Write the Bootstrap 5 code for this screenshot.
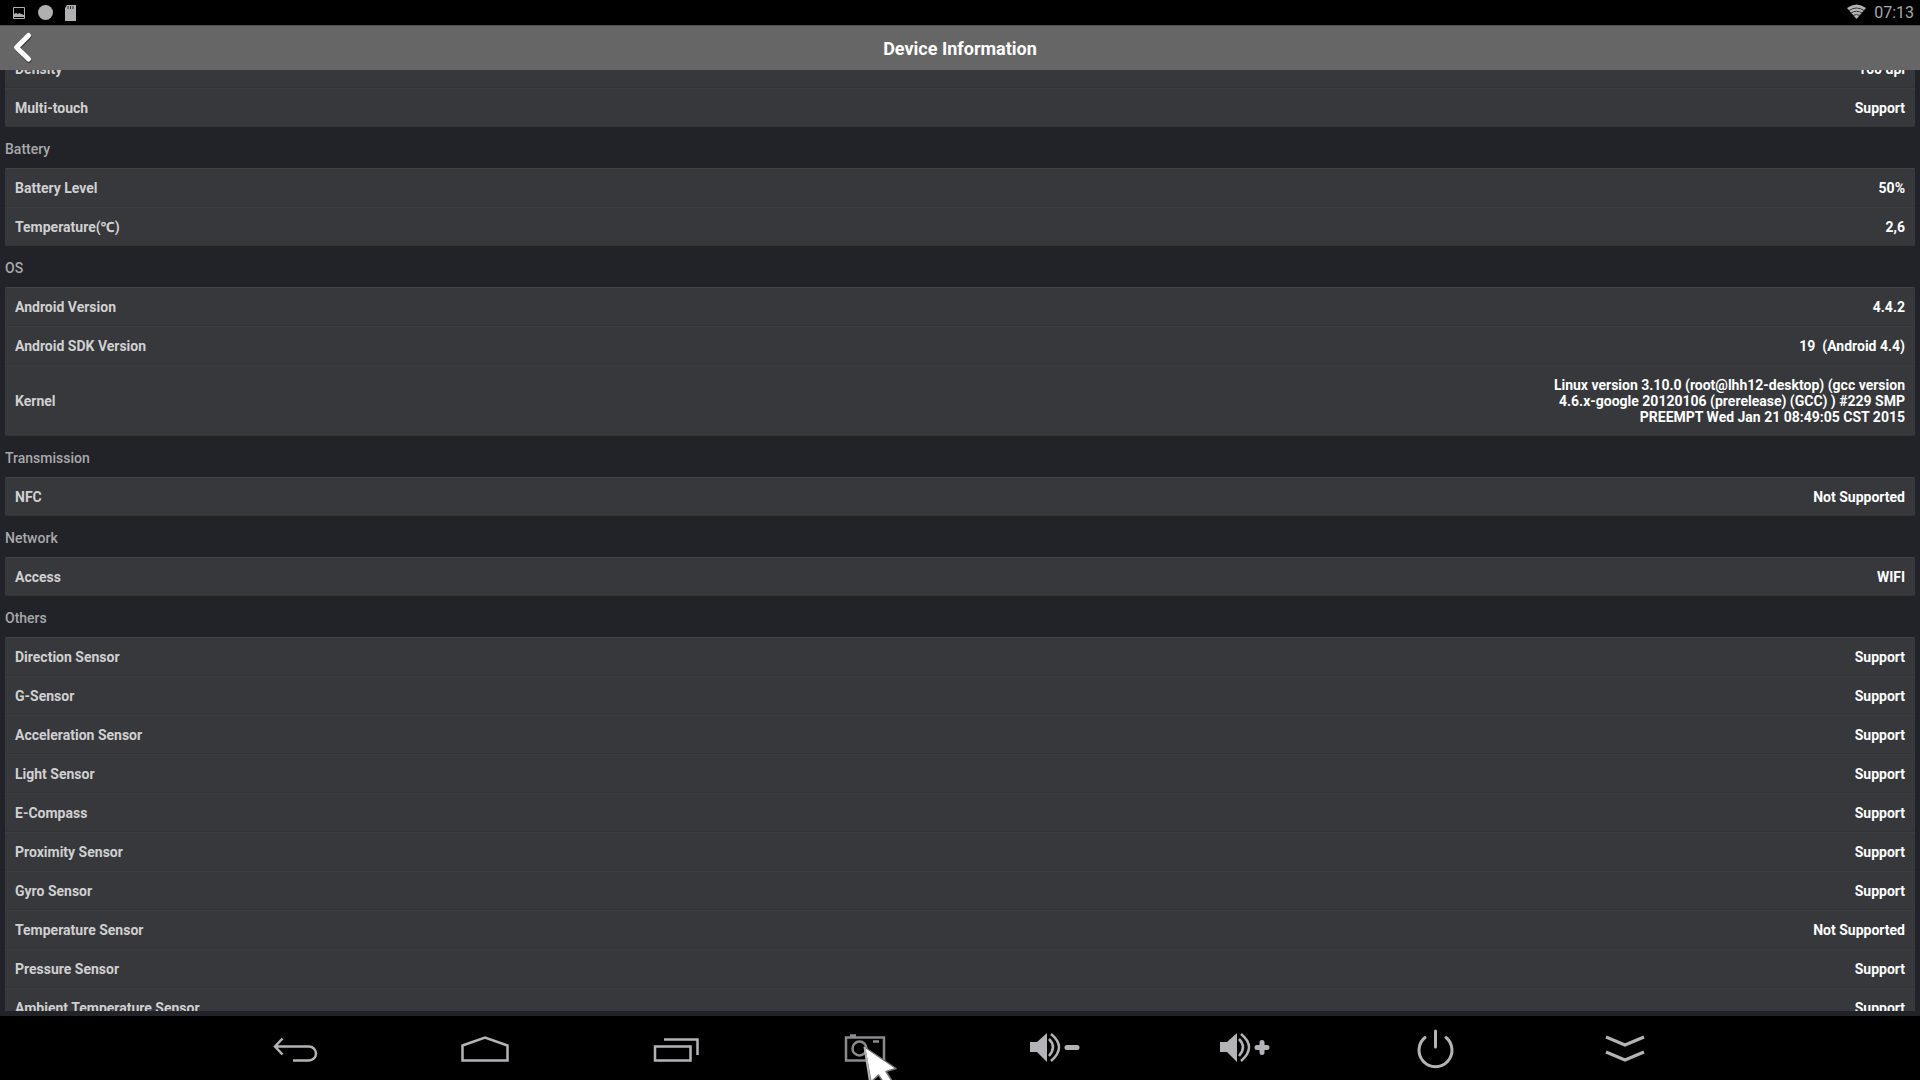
<!DOCTYPE html>
<html lang="en">
<head>
<meta charset="utf-8">
<meta name="viewport" content="width=device-width, initial-scale=1">
<title>Device Information</title>
<link href="https://cdn.jsdelivr.net/npm/bootstrap@5.3.0/dist/css/bootstrap.min.css" rel="stylesheet">
<style>
  body { background: #222328; color: #fff; font-family: Roboto, "Noto Sans", sans-serif; font-size: 14px; line-height: 16px; }
  .status-bar { background: #000; height: 25px; padding: 0 6px 0 12px; color: #a9a9ab; font-size: 16px; }
  .title-bar { background: #666; height: 45px; border-top: 1px solid #505050; padding-top: 2px; }
  .title-bar h1 { font-size: 18px; line-height: 22px; font-weight: 700; }
  .back-btn { width: 45px; height: 44px; }
  .info-scroll { min-height: 0; padding: 0 5px; margin-bottom: 5px; }
  .info-list { margin-top: -21px; }
  .section-title { font-size: 14px; line-height: 16px; font-weight: 500; color: #a8a9ab; margin: 0; padding: 14px 0 11px; }
  .info-card { background: #37383b; border-radius: 2px; overflow: hidden; }
  .info-row { padding: 12px 10px 11px; background: linear-gradient(#3c3d40, #3c3d40) top / 100% 1px no-repeat, linear-gradient(#333437, #333437) bottom / 100% 1px no-repeat; }
  .info-row:first-child { background: linear-gradient(#434447, #434447) top / 100% 1px no-repeat, linear-gradient(#333437, #333437) bottom / 100% 1px no-repeat; }
  .info-row dt { font-weight: 700; color: #d0d0d1; }
  .info-row dd { max-width: 360px; margin: 0; text-align: right; font-weight: 700; white-space: pre-wrap; }
  .nav-keys { background: #000; height: 64px; padding: 0 10.4%; color: #b4b4b6; }
  .nav-keys svg { overflow: visible; fill: none; stroke: currentColor; }
  .shot-key { color: #8b8b8d; }
  .nav-keys .pointer { overflow: hidden; left: 50%; top: 28px; margin-left: -3px; pointer-events: none; }
</style>
</head>
<body>
<div class="d-flex flex-column vh-100 overflow-hidden">
  <div class="status-bar d-flex align-items-center justify-content-between flex-shrink-0">
    <div class="d-flex align-items-center">
      <svg width="66" height="25" viewBox="0 0 66 25" fill="#b0b0b2" aria-hidden="true">
        <path d="M1.500 7.500h11v11h-11z" fill="none" stroke="#b0b0b2"/>
        <path d="M2 17v-3l2-1 2 1 1-1 5 2v2z"/>
        <circle cx="33.500" cy="12.500" r="7.500"/>
        <path d="M55 5h9v16H53V8z"/>
        <path d="M56 6v3M58.500 6v3M61 6v3" stroke="#333"/>
      </svg>
    </div>
    <div class="d-flex align-items-center gap-2">
      <svg width="19" height="25" viewBox="0 0 19 25" aria-hidden="true">
        <path d="M0 8Q9.500 1 19 8L9.500 19z" fill="#b4b4b6"/>
        <path d="M2 10.500q7.500-5 15 0M4 13q5.500-3.500 11 0M6 15.500q3.500-2 7 0" fill="none" stroke="#333" stroke-width="1"/>
      </svg>
      <span>07:13</span>
    </div>
  </div>

  <header class="title-bar position-relative d-flex align-items-center justify-content-center flex-shrink-0">
    <button type="button" class="back-btn btn p-0 border-0 position-absolute start-0 top-0" aria-label="Back">
      <svg class="d-block" width="45" height="44" viewBox="0 0 45 44" fill="none" stroke-linecap="round" stroke-linejoin="round" stroke-width="5">
        <path d="M29 11L17 22.500L29 34.500" stroke="#3c3c3c"/>
        <path d="M28.500 9.500L16.500 21.500L28.500 33" stroke="#fff"/>
      </svg>
    </button>
    <h1 class="m-0">Device Information</h1>
  </header>

  <main class="info-scroll flex-grow-1 overflow-hidden">
    <div class="info-list">
      <dl class="info-card m-0">
        <div class="info-row d-flex justify-content-between align-items-center"><dt>Density</dt><dd>160 dpi</dd></div>
        <div class="info-row d-flex justify-content-between align-items-center"><dt>Multi-touch</dt><dd>Support</dd></div>
      </dl>
      <h2 class="section-title">Battery</h2>
      <dl class="info-card m-0">
        <div class="info-row d-flex justify-content-between align-items-center"><dt>Battery Level</dt><dd>50%</dd></div>
        <div class="info-row d-flex justify-content-between align-items-center"><dt>Temperature(℃)</dt><dd>2,6</dd></div>
      </dl>
      <h2 class="section-title">OS</h2>
      <dl class="info-card m-0">
        <div class="info-row d-flex justify-content-between align-items-center"><dt>Android Version</dt><dd>4.4.2</dd></div>
        <div class="info-row d-flex justify-content-between align-items-center"><dt>Android SDK Version</dt><dd>19  (Android 4.4)</dd></div>
        <div class="info-row d-flex justify-content-between align-items-center"><dt>Kernel</dt><dd>Linux version 3.10.0 (root@lhh12-desktop) (gcc version 4.6.x-google 20120106 (prerelease) (GCC) ) #229 SMP PREEMPT Wed Jan 21 08:49:05 CST 2015</dd></div>
      </dl>
      <h2 class="section-title">Transmission</h2>
      <dl class="info-card m-0">
        <div class="info-row d-flex justify-content-between align-items-center"><dt>NFC</dt><dd>Not Supported</dd></div>
      </dl>
      <h2 class="section-title">Network</h2>
      <dl class="info-card m-0">
        <div class="info-row d-flex justify-content-between align-items-center"><dt>Access</dt><dd>WIFI</dd></div>
      </dl>
      <h2 class="section-title">Others</h2>
      <dl class="info-card m-0">
        <div class="info-row d-flex justify-content-between align-items-center"><dt>Direction Sensor</dt><dd>Support</dd></div>
        <div class="info-row d-flex justify-content-between align-items-center"><dt>G-Sensor</dt><dd>Support</dd></div>
        <div class="info-row d-flex justify-content-between align-items-center"><dt>Acceleration Sensor</dt><dd>Support</dd></div>
        <div class="info-row d-flex justify-content-between align-items-center"><dt>Light Sensor</dt><dd>Support</dd></div>
        <div class="info-row d-flex justify-content-between align-items-center"><dt>E-Compass</dt><dd>Support</dd></div>
        <div class="info-row d-flex justify-content-between align-items-center"><dt>Proximity Sensor</dt><dd>Support</dd></div>
        <div class="info-row d-flex justify-content-between align-items-center"><dt>Gyro Sensor</dt><dd>Support</dd></div>
        <div class="info-row d-flex justify-content-between align-items-center"><dt>Temperature Sensor</dt><dd>Not Supported</dd></div>
        <div class="info-row d-flex justify-content-between align-items-center"><dt>Pressure Sensor</dt><dd>Support</dd></div>
        <div class="info-row d-flex justify-content-between align-items-center"><dt>Ambient Temperature Sensor</dt><dd>Support</dd></div>
      </dl>
    </div>
  </main>

  <nav class="nav-keys d-flex flex-shrink-0" aria-label="System keys">
    <button type="button" class="btn p-0 border-0 flex-fill w-100 text-reset" aria-label="Back">
      <svg width="64" height="64" viewBox="0 0 64 64" stroke-width="2.500"><path d="M19.500 22.500L12 30.500L19.500 38.500M12 30.500H46a7 7 0 0 1 0 14H30"/></svg>
    </button>
    <button type="button" class="btn p-0 border-0 flex-fill w-100 text-reset" aria-label="Home">
      <svg width="64" height="64" viewBox="0 0 64 64" stroke-width="2.500"><path d="M9.500 44.500V29.500L32 21.500L54.500 29.500V44.500z"/></svg>
    </button>
    <button type="button" class="btn p-0 border-0 flex-fill w-100 text-reset" aria-label="Recent apps">
      <svg width="64" height="64" viewBox="0 0 64 64" stroke-width="2.500"><path d="M12 30.500H47.500V44.500H12zM21 23.500H54.500V39"/></svg>
    </button>
    <button type="button" class="btn p-0 border-0 flex-fill w-100 text-reset position-relative" aria-label="Screenshot">
      <svg class="shot-key" width="64" height="64" viewBox="0 0 64 64" stroke-width="2.500"><path d="M13 21.500H51V44.500H13zM17 19.500H23M40 25.500H46"/><circle cx="26.500" cy="32.500" r="7"/></svg>
      <svg class="pointer position-absolute" width="36" height="36" viewBox="0 0 36 36" aria-hidden="true">
        <path d="M2.500 3L34 24.500L24 27.500L32 40L24 42L16.500 31L9 38z" fill="#fff" stroke="#77777a" stroke-width="1.500" stroke-linejoin="round"/>
        <path d="M2.500 3L8 38" stroke="#b4b4b6" stroke-width="2"/>
      </svg>
    </button>
    <button type="button" class="btn p-0 border-0 flex-fill w-100 text-reset" aria-label="Volume down">
      <svg width="64" height="64" viewBox="0 0 64 64" stroke-width="2.500"><path d="M7 26h7L24 17V46L14 36H7z" fill="currentColor" stroke="none"/><path d="M26 23q8 8 0 17M28 18q16 13 0 27"/><path d="M44 31.500H54" stroke-width="5" stroke-linecap="round"/></svg>
    </button>
    <button type="button" class="btn p-0 border-0 flex-fill w-100 text-reset" aria-label="Volume up">
      <svg width="64" height="64" viewBox="0 0 64 64" stroke-width="2.500"><path d="M7 26h7L24 17V46L14 36H7z" fill="currentColor" stroke="none"/><path d="M26 23q8 8 0 17M28 18q16 13 0 27"/><path d="M44 31.500H54M49 26.500V36.500" stroke-width="5" stroke-linecap="round"/></svg>
    </button>
    <button type="button" class="btn p-0 border-0 flex-fill w-100 text-reset" aria-label="Power">
      <svg width="64" height="64" viewBox="0 0 64 64" stroke-width="3" stroke-linecap="round"><path d="M22 21.500a16.500 16.500 0 1 0 21 0M32.500 15V31"/></svg>
    </button>
    <button type="button" class="btn p-0 border-0 flex-fill w-100 text-reset" aria-label="Hide keys">
      <svg width="64" height="64" viewBox="0 0 64 64" stroke-width="3"><path d="M13 21L32 29L51 21M13 36L32 44L51 36"/></svg>
    </button>
  </nav>
</div>
<script src="https://cdn.jsdelivr.net/npm/bootstrap@5.3.0/dist/js/bootstrap.bundle.min.js"></script>
</body>
</html>
